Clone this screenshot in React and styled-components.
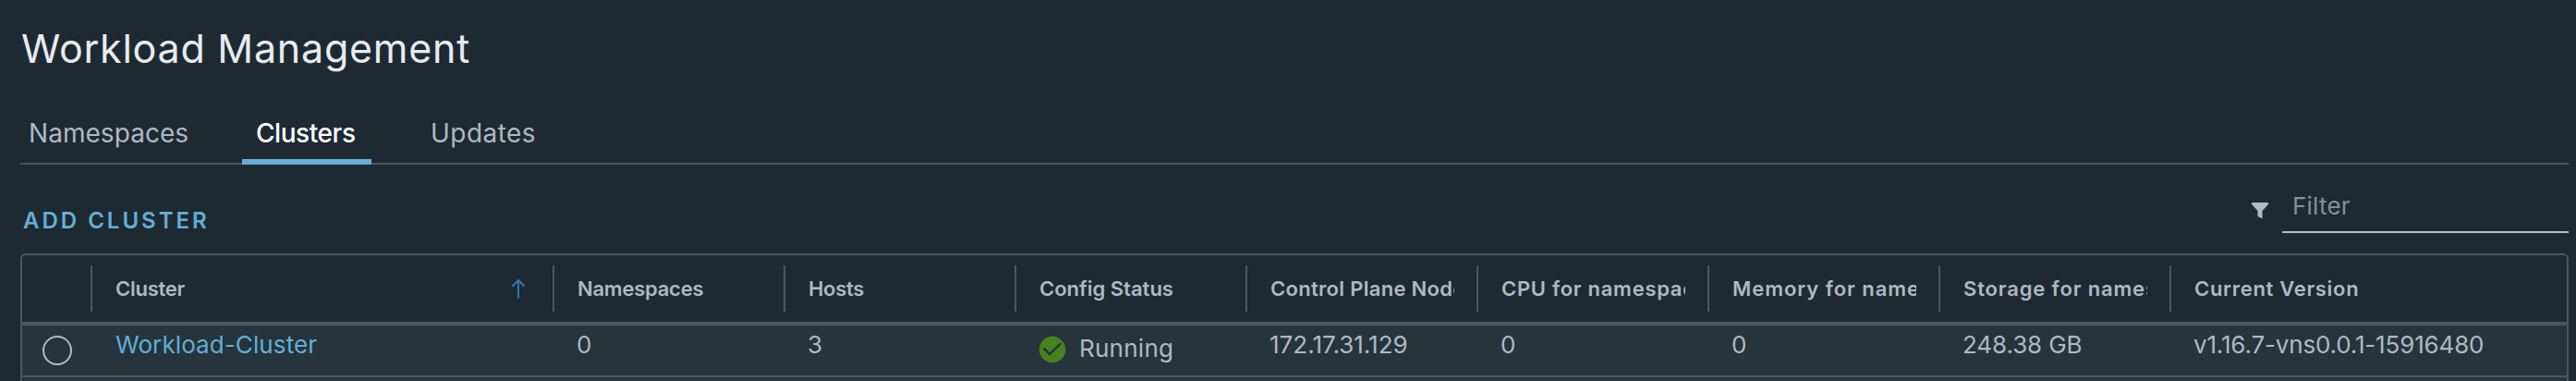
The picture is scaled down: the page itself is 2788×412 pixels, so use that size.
import React from 'react';
import styled, { createGlobalStyle, ThemeProvider } from 'styled-components';

const theme = {
  bg: '#1e2a32',
  rowBg: '#26343b',
  line: '#495762',
  text: '#adb9c3',
  link: '#63aed7',
};

const GlobalStyle = createGlobalStyle`
  * { box-sizing: border-box; }
  body {
    margin: 0;
    background: ${theme.bg};
    color: ${theme.text};
    font-family: Inter, "Open Sans", sans-serif;
    overflow: hidden;
  }
`;

const Page = styled.main`
  height: 412px;
  padding: 30px 8px 0 22px;
  overflow: hidden;
`;

const Title = styled.h1`
  margin: 0;
  padding-left: 1px;
  font-size: 43px;
  line-height: 45px;
  font-weight: 400;
  letter-spacing: 0.75px;
  color: #e9ebee;
`;

const Tabs = styled.nav`
  display: flex;
  gap: 48px;
  height: 63px;
  margin-top: 40px;
  border-bottom: 2px solid ${(p) => p.theme.line};
`;

const Tab = styled.button`
  flex: none;
  width: ${(p) => p.$width}px;
  height: 63px;
  padding: 1px 0 0 ${(p) => p.$inset}px;
  border: 0;
  border-bottom: 6px solid ${(p) => (p.$active ? p.theme.link : 'transparent')};
  background: none;
  color: ${(p) => (p.$active ? '#ffffff' : p.theme.text)};
  font: ${(p) => (p.$active ? 500 : 400)} 28px/46px Inter, "Open Sans", sans-serif;
  letter-spacing: ${(p) => p.$tracking}px;
  text-align: left;
  white-space: nowrap;
`;

const Toolbar = styled.div`
  display: flex;
  justify-content: space-between;
  align-items: flex-start;
  height: 96px;
`;

const AddButton = styled.button`
  margin: 41px 0 0;
  padding: 0 0 0 3px;
  border: 0;
  background: none;
  color: ${(p) => p.theme.link};
  font: 600 24px/40px Inter, "Open Sans", sans-serif;
  letter-spacing: 3px;
`;

const FilterGroup = styled.label`
  display: flex;
  gap: 15px;
  margin-top: 18px;
`;

const FilterIcon = styled.svg`
  width: 18px;
  height: 18px;
  margin-top: 23px;
`;

const FilterInput = styled.input`
  width: 310px;
  height: 56px;
  padding: 0 12px 1px 11px;
  border: 0;
  border-bottom: 2px solid #b0bec7;
  background: none;
  font: 400 26px/52px Inter, "Open Sans", sans-serif;
  letter-spacing: 0.2px;
  outline: none;
  &::placeholder { color: #898e96; opacity: 1; }
`;

const Grid = styled.section`
  height: 160px;
  border: 2px solid ${(p) => p.theme.line};
  border-radius: 6px;
  overflow: hidden;
`;

const columns = '74px 500px repeat(7, 250px) 1fr';

const HeaderRow = styled.div`
  display: grid;
  grid-template-columns: ${columns};
  align-items: center;
  height: 76px;
  border-bottom: 4px solid ${(p) => p.theme.line};
`;

const HeaderCell = styled.div`
  display: flex;
  align-items: center;
  justify-content: space-between;
  height: 50px;
  padding: 0 24px 0 25px;
  border-left: 2px solid ${(p) => p.theme.line};
  font-size: 22px;
  font-weight: 600;
`;

const HeaderLabel = styled.span`
  min-width: 0;
  overflow: hidden;
  white-space: nowrap;
  line-height: 40px;
  letter-spacing: ${(p) => p.$tracking}px;
`;

const SortIcon = styled.svg`
  width: 16px;
  height: 22px;
  margin-right: 5px;
`;

const Row = styled.div`
  display: grid;
  grid-template-columns: ${columns};
  height: 56px;
  border-bottom: 2px solid ${(p) => p.theme.line};
  background: ${(p) => p.theme.rowBg};
`;

const Cell = styled.div`
  padding-left: 26px;
  font-size: 26px;
  line-height: 41px;
  letter-spacing: ${(p) => p.$tracking || 0}px;
  white-space: nowrap;
`;

const ClusterLink = styled.a`
  padding-left: 1px;
  color: ${(p) => p.theme.link};
`;

const Radio = styled.span`
  width: 32px;
  height: 32px;
  margin: 10.5px 0 0 22px;
  border: 2px solid #b3bcc5;
  border-radius: 50%;
`;

const Status = styled.div`
  display: flex;
  gap: 14px;
  line-height: 49px;
`;

const StatusIcon = styled.svg`
  width: 30px;
  height: 30px;
  margin-top: 11px;
`;

const Footer = styled.div`
  height: 20px;
  background: ${(p) => p.theme.rowBg};
`;

const headers = [
  { label: 'Cluster', tracking: -0.25, sorted: true },
  { label: 'Namespaces', tracking: -0.25 },
  { label: 'Hosts', tracking: -0.3 },
  { label: 'Config Status', tracking: 0 },
  { label: 'Control Plane Node IP', tracking: 0.3 },
  { label: 'CPU for namespaces', tracking: 0.72 },
  { label: 'Memory for namespaces', tracking: 0.95 },
  { label: 'Storage for namespaces', tracking: 0.85 },
  { label: 'Current Version', tracking: 0.7 },
];

export default function App() {
  return (
    <ThemeProvider theme={theme}>
      <GlobalStyle />
      <Page>
        <Title>Workload Management</Title>
        <Tabs>
          <Tab $width={192} $inset={9} $tracking={0.05}>Namespaces</Tab>
          <Tab $width={140} $inset={15} $tracking={-0.45} $active>Clusters</Tab>
          <Tab $width={140} $inset={16} $tracking={0.45}>Updates</Tab>
        </Tabs>
        <Toolbar>
          <AddButton>ADD CLUSTER</AddButton>
          <FilterGroup>
            <FilterIcon viewBox="0 0 18 18">
              <path d="M0 0H18V2L11.5 9V17.4L6.5 15V9L0 2Z" fill="#adbbc4" />
            </FilterIcon>
            <FilterInput placeholder="Filter" />
          </FilterGroup>
        </Toolbar>
        <Grid>
          <HeaderRow>
            <span />
            {headers.map((h) => (
              <HeaderCell key={h.label}>
                <HeaderLabel $tracking={h.tracking}>{h.label}</HeaderLabel>
                {h.sorted && (
                  <SortIcon viewBox="0 0 16 22" fill="none" stroke="#2f76b5" strokeWidth="2" strokeLinecap="round">
                    <path d="M8 2V21M2 8L8 2L14 8" />
                  </SortIcon>
                )}
              </HeaderCell>
            ))}
          </HeaderRow>
          <Row>
            <Radio />
            <Cell $tracking={0.1}><ClusterLink>Workload-Cluster</ClusterLink></Cell>
            <Cell>0</Cell>
            <Cell>3</Cell>
            <Cell $tracking={0.25}>
              <Status>
                <StatusIcon viewBox="0 0 30 30">
                  <circle cx="15" cy="15" r="14.2" fill="#48821f" />
                  <path d="M6.2 14.2L12 20L23.5 9" fill="none" stroke="#26343b" strokeWidth="2.4" strokeLinecap="round" />
                </StatusIcon>
                Running
              </Status>
            </Cell>
            <Cell>172.17.31.129</Cell>
            <Cell>0</Cell>
            <Cell>0</Cell>
            <Cell $tracking={-0.1}>248.38 GB</Cell>
            <Cell $tracking={-0.16}>v1.16.7-vns0.0.1-15916480</Cell>
          </Row>
          <Footer />
        </Grid>
      </Page>
    </ThemeProvider>
  );
}
